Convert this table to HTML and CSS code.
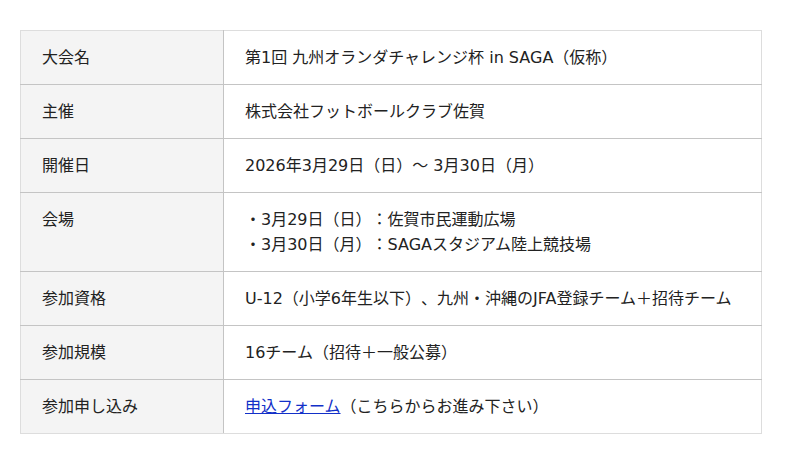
FILE: index.html
```html
<!DOCTYPE html>
<html lang="ja">
<head>
<meta charset="utf-8">
<link rel="stylesheet" href="styles.css">
</head>
<body>
<div class="wrap">
<table class="info">
  <tr><th>大会名</th><td>第1回 九州オランダチャレンジ杯 in SAGA（仮称）</td></tr>
  <tr><th>主催</th><td>株式会社フットボールクラブ佐賀</td></tr>
  <tr><th>開催日</th><td>2026年3月29日（日）～ 3月30日（月）</td></tr>
  <tr><th>会場</th><td>・3月29日（日）：佐賀市民運動広場<br>・3月30日（月）：SAGAスタジアム陸上競技場</td></tr>
  <tr><th>参加資格</th><td>U-12（小学6年生以下）、九州・沖縄のJFA登録チーム＋招待チーム</td></tr>
  <tr><th>参加規模</th><td>16チーム（招待＋一般公募）</td></tr>
  <tr><th>参加申し込み</th><td><a href="#" class="link">申込フォーム</a>（こちらからお進み下さい）</td></tr>
</table>
</div>
</body>
</html>
```
FILE: styles.css
```css
html, body {
  margin: 0;
  padding: 0;
  background: #fff;
}
body {
  font-family: "DejaVu Sans", "Noto Sans CJK JP", sans-serif;
  font-size: 16px;
  color: #222;
  text-spacing-trim: space-all;
}
.wrap {
  padding: 30px 38px 0 20px;
}
.info {
  width: 742px;
  border-collapse: collapse;
  border: 1px solid #ddd;
}
.info th, .info td {
  text-align: left;
  vertical-align: top;
  font-weight: normal;
  line-height: 25px;
  padding: 14px 21px;
  border-top: 1px solid #c4c4c4;
  border-bottom: 1px solid #c4c4c4;
}
.info th {
  width: 160px;
  background: #f4f4f4;
  border-right: 1px solid #c4c4c4;
}
.info tr:first-child th, .info tr:first-child td { border-top-color: #ddd; }
.info tr:last-child th, .info tr:last-child td { border-bottom-color: #ddd; }
.link {
  color: #1230c8;
  text-decoration: underline;
}
```
